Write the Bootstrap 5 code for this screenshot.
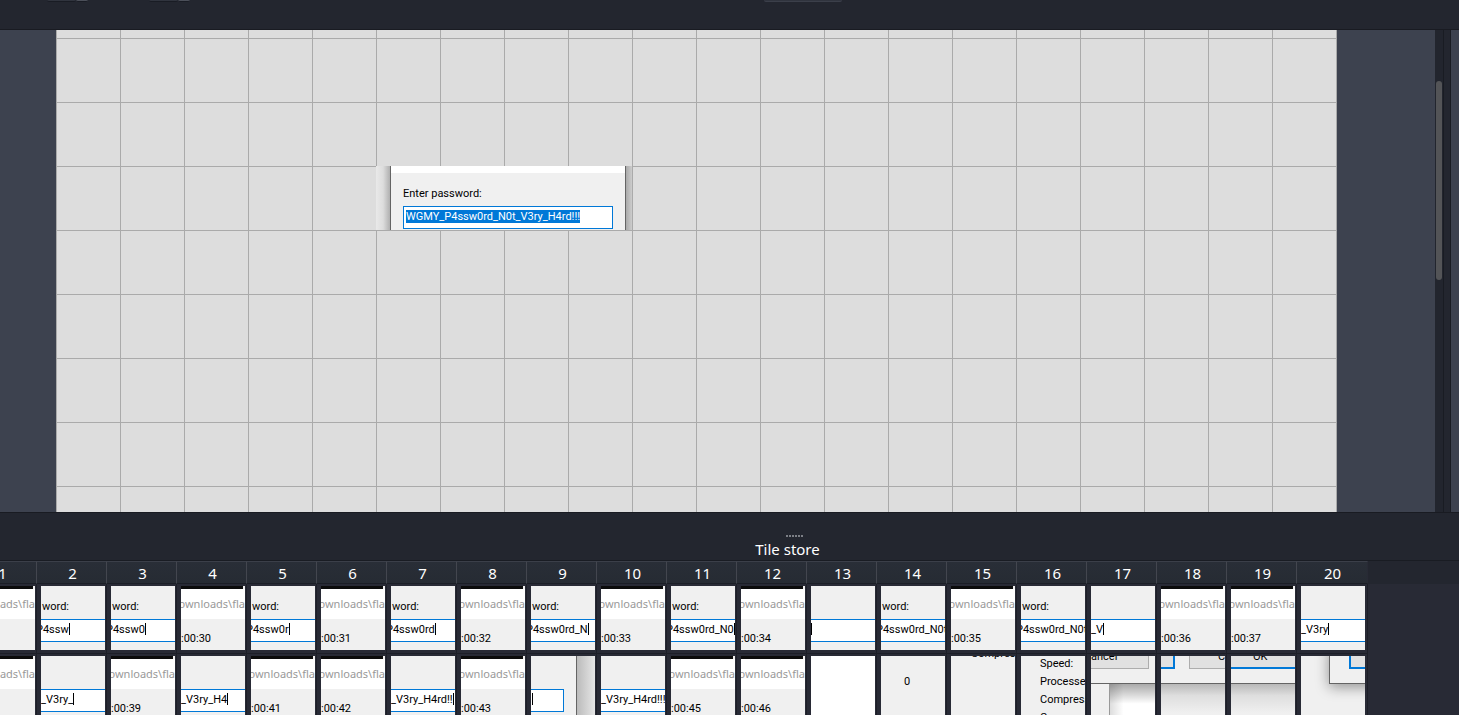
<!DOCTYPE html>
<html lang="en">
<head>
<meta charset="utf-8">
<meta name="viewport" content="width=device-width, initial-scale=1">
<title>Tile editor</title>
<link href="https://cdn.jsdelivr.net/npm/bootstrap@5.3.0/dist/css/bootstrap.min.css" rel="stylesheet">
<style>
body{background:#23262f;color:#fff;font-family:"Noto Sans",sans-serif;font-size:15px;line-height:20px}
.toolstrip{height:30px;border-bottom:1px solid #191b22;flex:none}
.stub{height:2px;background:#30343e;border-bottom:1px solid #191c24;border-radius:0 0 3px 3px}
.stub-l{width:29px}.stub-r{width:12px;background:#4b4f59}
.stub-mid{width:78px;border-color:#3b3f4a}
.workarea{flex:483 1 0;min-height:0;border-bottom:1px solid #191b22}
.mapview{background:#3d424f;padding-left:56px}
.mapgrid{width:1281px;height:100%;flex:none;background:
 linear-gradient(90deg,#aaa 1px,transparent 1px) 0 0/64px 64px,
 linear-gradient(#aaa 1px,transparent 1px) 0 8px/64px 64px,#ddd}
.vscroll{width:9px;border-right:1px solid #191c23;background:#22252e;padding:51px 1px 0 1px}
.vthumb{height:199px;background:#535457;border-radius:3px}
.sidepane{width:9px;margin-left:6px;background:#3d424f;border-left:1px solid #191c23}
.win{color:#000;font-family:Roboto,sans-serif;font-size:11px;line-height:14px}
.placed{left:320px;top:136px;width:256px;height:64px;overflow:hidden;background:#ddd}
.shade-l{width:14px;background:linear-gradient(90deg,#e9e9e9,#ddd 50%,#b0b0b0)}
.shade-r{width:6px;background:linear-gradient(90deg,#aaa,#ccc)}
.dlg{background:#f0f0f0;border:1px solid #646464;border-width:0 1px}
.dlgcap{height:7px;background:#fff}
.dlgbody{padding:14px 12px 0}
.pw{display:block;width:100%;height:23px;margin-top:5px;padding:0 2px 2px;border:1px solid #0078d7;border-radius:0;background:#fff;color:#000;font:inherit;outline:0}
.pw::selection{background:#0078d7;color:#fff}
.store{flex:202 1 0;min-height:0}
.griprow{padding-left:14px}
.grip{width:18px;height:2px;margin:22px auto 0;background:repeating-linear-gradient(90deg,#7c7f86 0 2px,transparent 2px 3px)}
.dockhead{margin-right:-116px}
.store-title{font-size:15px;line-height:20px;padding:2px 0 1px}
.storebody{background:#282a35;border-top:1px solid #191c23}
.tiles{width:1401px;margin-left:-33px;table-layout:fixed;border-collapse:separate;border-spacing:0}
.tiles th{width:70px;height:23px;padding:0 0 0 2px;border-top:1px solid #3b3f49;border-right:1px solid #43464f;border-bottom:1px solid #1b1e26;background:linear-gradient(#292e37,#262b33);font-weight:400;text-align:center;line-height:20px}
.tiles th:last-child{width:71px;padding-right:1px;border-right-color:#282a35}
.tiles td{height:70px;padding:2px 1px 3px 4px;border-right:1px solid #1d1f28;border-bottom:1px solid #1d1f28}
.emptyhead{height:23px;background:#23262f}
.tile{position:relative;width:64px;height:64px;overflow:hidden;background:#f0f0f0;white-space:pre}
.tile>*{position:absolute}
.blackbar{left:0;top:0;width:62px;height:3px;background:#0c0c0c}
.linkrow{left:0;top:3px;width:100%;height:30px;background:#fff}
.linktxt{right:0;top:11px;color:#999;font-family:"Noto Sans",sans-serif;font-size:11px;line-height:14px}
.clock{left:0;top:46px}
.wordlbl{left:1px;top:14px}
.field{left:0;right:0;top:33px;height:23px;background:#fff;border:solid #0078d7;border-width:1px 0;padding-top:3px}
.field.end{right:31px;padding-left:1px;border-right-width:1px}
.caret{display:inline-block;width:1px;height:12px;background:#000;vertical-align:top}
.pbtn{background:#e1e1e1;border:1px solid #adadad;top:-12px;height:25px}
.pbtn.ok{border:2px solid #0078d7}
.edge{left:0;right:0;top:27px;height:30px;border-top:1px solid #646464;background:linear-gradient(#b8b8b8,#dedede 40%,#f0f0f0)}
</style>
</head>
<body class="vh-100 overflow-hidden d-flex flex-column">
<header class="toolstrip d-flex align-items-start" aria-hidden="true">
 <span class="stub stub-l" style="margin-left:47px"></span><span class="stub stub-r"></span>
 <span class="stub stub-l" style="margin-left:61px"></span><span class="stub stub-r"></span>
 <span class="stub stub-mid" style="margin-left:574px"></span>
</header>
<main class="workarea d-flex">
 <section class="mapview flex-grow-1 overflow-hidden" aria-label="Map">
  <div class="mapgrid position-relative">
   <div class="placed win position-absolute d-flex">
    <div class="shade-l"></div>
    <div class="dlg flex-grow-1"><div class="dlgcap"></div>
     <div class="dlgbody"><label class="d-block" for="pw">Enter password:</label>
      <input class="pw" id="pw" type="text" value="WGMY_P4ssw0rd_N0t_V3ry_H4rd!!!" spellcheck="false"></div></div>
    <div class="shade-r"></div>
   </div>
  </div>
 </section>
 <div class="vscroll"><div class="vthumb"></div></div>
 <div class="sidepane"></div>
</main>
<section class="store d-flex flex-column overflow-hidden">
 <div class="dockhead text-center"><div class="griprow"><div class="grip"></div></div><div class="store-title">Tile store</div></div>
 <div class="storebody d-flex flex-grow-1 align-items-start">
  <table class="tiles flex-shrink-0"><thead><tr id="cols"></tr></thead><tbody id="rows"></tbody></table>
  <div class="emptyhead flex-grow-1"></div>
 </div>
</section>
<script src="https://cdn.jsdelivr.net/npm/bootstrap@5.3.0/dist/js/bootstrap.bundle.min.js"></script>
<script>
const caret = '<i class="caret"></i>';
const link = t => `<span class="blackbar"></span><span class="linkrow"></span><span class="linktxt">ownloads\\fla</span><span class="clock">${t ? ':00:' + t : ''}</span>`;
const field = (t, c = caret) => `<span class="field">${t}${c}</span>`;
const word = (t, c) => `<span class="wordlbl">word:</span>` + field('<span style="margin-left:-5px">' + t + '</span>', c);
const row1 = [link(), word('P4ssw'), word('P4ssw0'), link(30), word('P4ssw0r'), link(31), word('P4ssw0rd'), link(32),
 word('P4ssw0rd_N'), link(33), word('P4ssw0rd_N0'), link(34), field(''), word('P4ssw0rd_N0t', ''), link(35),
 word('P4ssw0rd_N0t', ''), field('_V'), link(36), link(37), field('_V3ry')];
const row2 = [link(), field('_V3ry_'), link(39), field('_V3ry_H4'), link(41), link(42), field('_V3ry_H4rd!!'), link(43),
 `<span class="field end">${caret}</span><span style="left:45px;top:0;width:19px;height:64px;border-left:1px solid #646464;background:linear-gradient(90deg,#bbb,#e6e6e6)"></span>`,
 field('_V3ry_H4rd!!!', ''), link(45), link(46),
 '<span class="bg-white w-100 h-100"></span>',
 '<span style="left:23px;top:19px">0</span>',
 '<span style="left:20px;top:-9px">Compressed</span>',
 '<span style="left:19px;top:-1px;line-height:18px">Speed:\nProcessed:\nCompressed\nCompression</span>',
 '<span class="pbtn" style="left:-20px;width:78px"></span><span style="left:0;top:-6px">ancel</span><span style="left:0;top:27px;width:64px;height:1px;background:#646464"></span><span style="left:18px;top:28px;width:46px;height:36px;border-left:1px solid #999;background:linear-gradient(#0005,#0000 55%),linear-gradient(90deg,#ddd,#fff 30%)"></span>',
 '<span class="pbtn ok" style="left:-50px;width:64px"></span><span class="pbtn" style="left:28px;width:78px"></span><span style="left:57px;top:-6px">C</span><span class="edge"></span>',
 '<span class="pbtn ok" style="left:-9px;width:78px"></span><span style="left:22px;top:-6px">OK</span><span class="edge"></span>',
 '<span style="left:28px;top:-10px;width:50px;height:38px;background:#f0f0f0;border:1px solid #646464;box-shadow:0 3px 14px #0006"></span><span class="pbtn ok" style="left:48px;width:78px"></span>'];
cols.innerHTML = row1.map((_, i) => `<th scope="col">${i + 1}</th>`).join('');
rows.innerHTML = [row1, row2].map(r => '<tr>' + r.map(t => `<td><div class="tile win">${t}</div></td>`).join('') + '</tr>').join('');
pw.focus({preventScroll: true});
pw.select();
</script>
</body>
</html>
